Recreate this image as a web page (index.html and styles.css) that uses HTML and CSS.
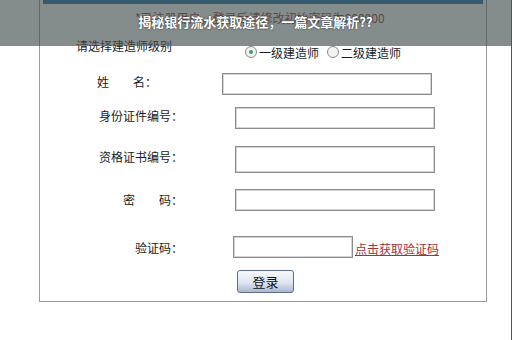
FILE: index.html
```html
<!DOCTYPE html>
<html lang="zh-CN">
<head>
    <meta charset="UTF-8">
    <meta name="viewport" content="width=device-width, initial-scale=1.0">
    <title>揭秘银行流水获取途径</title>
    <link rel="stylesheet" href="styles.css">
</head>
<body>

<div class="page">
    <div class="frame">
        <div class="top-bar"></div>
        <div class="notice">*已注册用户，登录后请修改初始密码为000000</div>

        <div class="level-row">
            <span class="level-label">请选择建造师级别</span>
            <span class="radios">
                <span class="radio checked"></span>一级建造师
                <span class="radio"></span>二级建造师
            </span>
        </div>

        <div class="row row-name">
            <label class="label label-short">姓　　名：</label>
            <span class="field field-wide"></span>
        </div>
        <div class="row row-id">
            <label class="label">身份证件编号：</label>
            <span class="field"></span>
        </div>
        <div class="row row-cert">
            <label class="label">资格证书编号：</label>
            <span class="field field-tall"></span>
        </div>
        <div class="row row-pwd">
            <label class="label">密　　码：</label>
            <span class="field"></span>
        </div>
        <div class="row row-code">
            <label class="label">验证码：</label>
            <span class="field field-code"></span>
            <a class="code-link" href="#">点击获取验证码</a>
        </div>
        <div class="btn-row">
            <button class="login-btn">登录</button>
        </div>
    </div>

    <!-- 标题遮罩 -->
    <div class="title-overlay">
        <h1>揭秘银行流水获取途径，一篇文章解析??</h1>
    </div>
</div>

</body>
</html>
```

FILE: styles.css
```css
body {
    margin: 0;
    padding: 0;
    background-color: #fff;
    font-family: "Noto Sans CJK SC", "Noto Sans", sans-serif;
    color: #1a1a1a;
}
.page {
    position: relative;
    width: 511px;
    height: 340px;
    overflow: hidden;
    border-right: 1px solid #1f6a72;
}
.frame {
    margin-left: 39px;
    width: 446px;
    height: 301px;
    border: 1px solid #9a9a9a;
    border-top: none;
}
.top-bar {
    height: 4px;
    margin: 0 3px;
    background-color: #1b6fa8;
}
.notice {
    height: 30px;
    line-height: 28px;
    padding-left: 95px;
    font-size: 12px;
    color: #8a3a3a;
}
.level-row {
    display: flex;
    height: 20px;
    margin-top: 5px;
    font-size: 12px;
}
.level-label {
    padding-left: 36px;
    line-height: 14px;
}
.radios {
    display: flex;
    align-items: center;
    height: 14px;
    margin-top: 6px;
    margin-left: 73px;
}
.radio {
    width: 10px;
    height: 10px;
    margin: 0 2px 0 0;
    border: 1px solid #8a8a8a;
    border-radius: 50%;
    background-color: #f2f2f2;
    position: relative;
}
.radios .radio:nth-of-type(2) {
    margin-left: 8px;
}
.radio.checked::after {
    content: "";
    position: absolute;
    left: 3px;
    top: 3px;
    width: 4px;
    height: 4px;
    border-radius: 50%;
    background-color: #3aa36a;
}
.row {
    display: flex;
    align-items: flex-start;
    font-size: 12px;
}
.label {
    width: 143px;
    text-align: right;
    line-height: 16px;
    padding-top: 1px;
}
.label-short {
    width: 117px;
}
.field {
    display: block;
    width: 198px;
    height: 20px;
    margin-left: 52px;
    border: 1px solid #8c8c8c;
    box-shadow: inset 0 0 0 1px #d4d4d4;
    background-color: #fff;
}
.field-wide {
    width: 208px;
    margin-left: 65px;
}
.field-tall {
    height: 25px;
}
.field-code {
    width: 118px;
    margin-left: 50px;
}
.row-name {
    margin-top: 14px;
}
.row-id {
    margin-top: 12px;
}
.row-cert {
    margin-top: 17px;
}
.row-cert .label,
.row-pwd .label {
    padding-top: 3px;
}
.row-pwd {
    margin-top: 16px;
}
.row-code {
    margin-top: 25px;
}
.row-code .label {
    padding-top: 4px;
}
.code-link {
    margin-left: 2px;
    padding-top: 6px;
    line-height: 14px;
    font-size: 12px;
    color: #a3303a;
    text-decoration: underline;
}
.btn-row {
    margin-top: 10px;
    padding-left: 197px;
}
.login-btn {
    width: 57px;
    height: 23px;
    padding: 0;
    font-family: inherit;
    font-size: 13px;
    color: #111;
    border: 1px solid #5f6f88;
    border-radius: 3px;
    background: linear-gradient(#f7f9fc, #dfe6f1 55%, #a9b8d2);
}
.title-overlay {
    position: absolute;
    left: 0;
    top: 0;
    width: 100%;
    height: 46px;
    background-color: rgba(70, 80, 80, 0.66);
}
.title-overlay h1 {
    margin: 0;
    padding-top: 14px;
    text-align: center;
    font-size: 13px;
    line-height: 16px;
    font-weight: bold;
    color: #fff;
    text-shadow: 0 0 2px rgba(0, 0, 0, 0.7);
}
```
